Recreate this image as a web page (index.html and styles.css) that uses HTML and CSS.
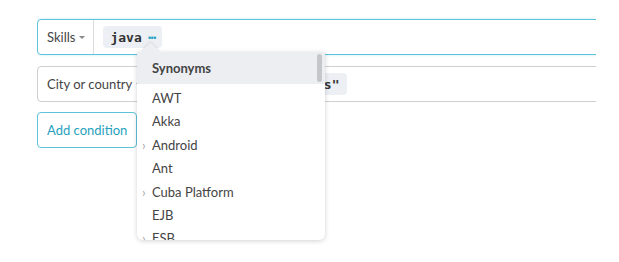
FILE: index.html
```html
<!DOCTYPE html>
<html lang="en">
<head>
    <meta charset="UTF-8">
    <title>Search conditions</title>
    <link rel="stylesheet" href="styles.css">
</head>
<body>
    <div class="panel">
        <div class="conditions">
            <div class="condition active">
                <div class="field">Skills <span class="caret"></span></div>
                <div class="values">
                    <span class="chip"><code>java</code> <span class="more">&middot;&middot;&middot;</span></span>
                </div>
            </div>

            <div class="condition">
                <div class="field">City or country <span class="caret"></span></div>
                <div class="values">
                    <span class="chip"><code>"Chicago" "Twin Falls"</code></span>
                </div>
            </div>

            <button class="add">Add condition</button>
        </div>

        <div class="dropdown">
            <div class="notch"></div>
            <div class="list">
                <div class="head">Synonyms</div>
                <div class="item">AWT</div>
                <div class="item">Akka</div>
                <div class="item nested">Android</div>
                <div class="item">Ant</div>
                <div class="item nested">Cuba Platform</div>
                <div class="item">EJB</div>
                <div class="item nested">ESB</div>
            </div>
            <div class="scrollbar"></div>
        </div>
    </div>
</body>
</html>
```

FILE: styles.css
```css
html, body {
    height: 100%;
}

body {
    margin: 0;
    min-height: 262px;
    font-family: 'Lato', 'Open Sans', Arial, sans-serif;
    font-size: 13px;
    color: #333;
    background: #fff;
}

.panel {
    position: relative;
    margin: 0 0 0 37px;
    padding-top: 19px;
    height: 230px;
}

.conditions {
    width: 559px;
    padding: 3px 0;
    margin-top: -3px;
    overflow: hidden;
    display: flex;
    flex-direction: column;
    align-items: flex-start;
    gap: 11px;
}

.condition {
    display: flex;
    align-items: stretch;
    width: 600px;
    height: 36px;
    flex-shrink: 0;
    box-sizing: border-box;
    border: 1px solid #cfcfcf;
    border-radius: 4px;
    background: #fff;
}

.condition.active {
    border-color: #5ec2da;
    box-shadow: 0 0 3px rgba(94, 194, 218, 0.35);
}

.field {
    display: flex;
    align-items: center;
    padding: 0 8px 0 9px;
    border-right: 1px solid #dcdcdc;
    color: #444;
}

.caret {
    display: inline-block;
    margin-left: 4px;
    border-left: 3px solid transparent;
    border-right: 3px solid transparent;
    border-top: 3px solid #888;
}

.values {
    display: flex;
    align-items: center;
    padding-left: 9px;
}

.chip {
    display: flex;
    align-items: center;
    height: 22px;
    padding: 0 7px;
    border-radius: 4px;
    background: #eceff3;
}

.chip code {
    font-family: 'DejaVu Sans Mono', monospace;
    font-weight: bold;
    font-size: 13px;
    color: #333;
}

.more {
    margin-left: 6px;
    color: #2aa3c4;
    font-weight: bold;
    letter-spacing: -1px;
}

.add {
    height: 36px;
    margin-top: -1px;
    padding: 0 9px;
    border: 1px solid #5ec2da;
    border-radius: 4px;
    background: #fff;
    color: #27a1be;
    font-family: inherit;
    font-size: 13px;
}

.dropdown {
    position: absolute;
    left: 100px;
    top: 52px;
    width: 188px;
    height: 188px;
    background: #fff;
    border-radius: 0 0 6px 6px;
    box-shadow: 0 1px 5px rgba(0, 0, 0, 0.18);
}

.notch {
    position: absolute;
    left: 7px;
    top: -7px;
    width: 13px;
    height: 13px;
    background: #eceef2;
    transform: rotate(45deg);
    box-shadow: -1px -1px 2px rgba(0, 0, 0, 0.08);
}

.list {
    position: relative;
    height: 100%;
    overflow: hidden;
    border-radius: 0 0 6px 6px;
}

.head {
    position: relative;
    height: 32px;
    line-height: 32px;
    padding-left: 15px;
    background: #eceef2;
    font-weight: bold;
    color: #444;
}

.item {
    position: relative;
    height: 23.4px;
    line-height: 23.4px;
    padding-left: 15px;
    color: #444;
}

.head + .item {
    margin-top: 3px;
}

.item.nested::before {
    content: '\203A';
    position: absolute;
    left: 5px;
    color: #aaa;
}

.scrollbar {
    position: absolute;
    right: 3px;
    top: 2px;
    width: 5px;
    height: 28px;
    border-radius: 3px;
    background: #c4c6c9;
}
```
